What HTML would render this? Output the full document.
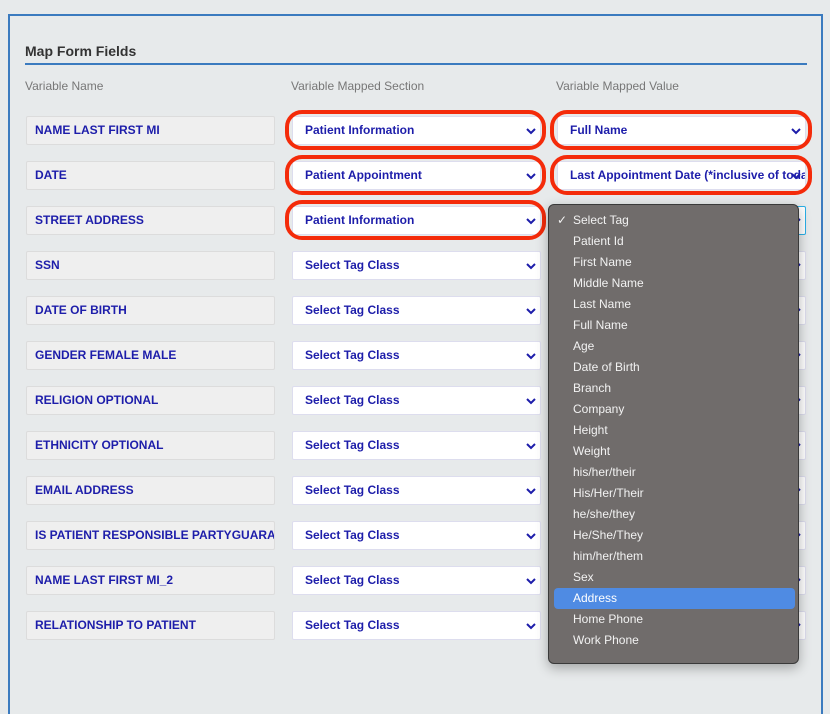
<!DOCTYPE html>
<html><head><meta charset="utf-8"><style>
*{box-sizing:border-box;margin:0;padding:0}
body{width:830px;height:652px;overflow:hidden;background:#e7eaeb;font-family:"Liberation Sans",sans-serif;position:relative}
.panel{position:absolute;left:8px;top:14px;width:815px;height:700px;border:2px solid #3b7bbf;border-bottom:none;background:#e7eaeb}
.title{position:absolute;left:25px;top:43px;font-size:14px;font-weight:bold;color:#333}
.ul{position:absolute;left:25px;top:63px;width:782px;height:2px;background:#3b7bbf}
.hd{position:absolute;top:79px;font-size:12px;color:#777}
.nm{position:absolute;left:26px;width:249px;height:29px;background:#efefef;border:1px solid #dcdcdc;border-radius:2px;font-size:12px;font-weight:bold;color:#1d1daa;padding-left:8px;line-height:27px;white-space:nowrap;overflow:hidden}
.sel{position:absolute;width:249px;height:29px;background:#fff;border:1px solid #dde;border-radius:2px;font-size:12px;font-weight:bold;color:#1d1daa;padding-left:12px;line-height:27px;white-space:nowrap;overflow:hidden}
.sel svg{position:absolute;right:4px;top:10px}
.ring{position:absolute;border:4px solid #f42b0a;border-radius:17px;width:261px;height:40px}
.dd{position:absolute;left:548px;top:204px;width:251px;height:460px;background:#706c6b;border:1px solid #3a3a3a;border-radius:6px;box-shadow:0 4px 12px rgba(0,0,0,.3)}
.it{position:absolute;left:24px;font-size:12px;color:#f2f2f2;line-height:21px}
.hl{position:absolute;left:5px;top:383px;width:241px;height:21px;background:#4f8be3;border-radius:4px}
</style></head><body>
<div class="panel"></div>
<div class="title">Map Form Fields</div>
<div class="ul"></div>
<div class="hd" style="left:25px">Variable Name</div>
<div class="hd" style="left:291px">Variable Mapped Section</div>
<div class="hd" style="left:556px">Variable Mapped Value</div>

<div class="nm" style="top:116px">NAME LAST FIRST MI</div>
<div class="nm" style="top:161px">DATE</div>
<div class="nm" style="top:206px">STREET ADDRESS</div>
<div class="nm" style="top:251px">SSN</div>
<div class="nm" style="top:296px">DATE OF BIRTH</div>
<div class="nm" style="top:341px">GENDER FEMALE MALE</div>
<div class="nm" style="top:386px">RELIGION OPTIONAL</div>
<div class="nm" style="top:431px">ETHNICITY OPTIONAL</div>
<div class="nm" style="top:476px">EMAIL ADDRESS</div>
<div class="nm" style="top:521px">IS PATIENT RESPONSIBLE PARTYGUARANTOR</div>
<div class="nm" style="top:566px">NAME LAST FIRST MI_2</div>
<div class="nm" style="top:611px">RELATIONSHIP TO PATIENT</div>

<div class="sel" style="left:292px;top:116px">Patient Information<svg width="10" height="8"><path d="M1 2l4 4 4-4" stroke="#1d1daa" stroke-width="2" fill="none"/></svg></div>
<div class="sel" style="left:292px;top:161px">Patient Appointment<svg width="10" height="8"><path d="M1 2l4 4 4-4" stroke="#1d1daa" stroke-width="2" fill="none"/></svg></div>
<div class="sel" style="left:292px;top:206px">Patient Information<svg width="10" height="8"><path d="M1 2l4 4 4-4" stroke="#1d1daa" stroke-width="2" fill="none"/></svg></div>
<div class="sel" style="left:292px;top:251px">Select Tag Class<svg width="10" height="8"><path d="M1 2l4 4 4-4" stroke="#1d1daa" stroke-width="2" fill="none"/></svg></div>
<div class="sel" style="left:292px;top:296px">Select Tag Class<svg width="10" height="8"><path d="M1 2l4 4 4-4" stroke="#1d1daa" stroke-width="2" fill="none"/></svg></div>
<div class="sel" style="left:292px;top:341px">Select Tag Class<svg width="10" height="8"><path d="M1 2l4 4 4-4" stroke="#1d1daa" stroke-width="2" fill="none"/></svg></div>
<div class="sel" style="left:292px;top:386px">Select Tag Class<svg width="10" height="8"><path d="M1 2l4 4 4-4" stroke="#1d1daa" stroke-width="2" fill="none"/></svg></div>
<div class="sel" style="left:292px;top:431px">Select Tag Class<svg width="10" height="8"><path d="M1 2l4 4 4-4" stroke="#1d1daa" stroke-width="2" fill="none"/></svg></div>
<div class="sel" style="left:292px;top:476px">Select Tag Class<svg width="10" height="8"><path d="M1 2l4 4 4-4" stroke="#1d1daa" stroke-width="2" fill="none"/></svg></div>
<div class="sel" style="left:292px;top:521px">Select Tag Class<svg width="10" height="8"><path d="M1 2l4 4 4-4" stroke="#1d1daa" stroke-width="2" fill="none"/></svg></div>
<div class="sel" style="left:292px;top:566px">Select Tag Class<svg width="10" height="8"><path d="M1 2l4 4 4-4" stroke="#1d1daa" stroke-width="2" fill="none"/></svg></div>
<div class="sel" style="left:292px;top:611px">Select Tag Class<svg width="10" height="8"><path d="M1 2l4 4 4-4" stroke="#1d1daa" stroke-width="2" fill="none"/></svg></div>

<div class="sel" style="left:557px;top:116px">Full Name<svg width="10" height="8"><path d="M1 2l4 4 4-4" stroke="#1d1daa" stroke-width="2" fill="none"/></svg></div>
<div class="sel" style="left:557px;top:161px;padding-right:24px">Last Appointment Date (*inclusive of today)<svg width="10" height="8"><path d="M1 2l4 4 4-4" stroke="#1d1daa" stroke-width="2" fill="none"/></svg></div>
<div class="sel" style="left:557px;top:206px;border-color:#2bb0e8"><svg width="10" height="8"><path d="M1 2l4 4 4-4" stroke="#1d1daa" stroke-width="2" fill="none"/></svg></div>
<div class="sel" style="left:557px;top:251px"><svg width="10" height="8"><path d="M1 2l4 4 4-4" stroke="#1d1daa" stroke-width="2" fill="none"/></svg></div>
<div class="sel" style="left:557px;top:296px"><svg width="10" height="8"><path d="M1 2l4 4 4-4" stroke="#1d1daa" stroke-width="2" fill="none"/></svg></div>
<div class="sel" style="left:557px;top:341px"><svg width="10" height="8"><path d="M1 2l4 4 4-4" stroke="#1d1daa" stroke-width="2" fill="none"/></svg></div>
<div class="sel" style="left:557px;top:386px"><svg width="10" height="8"><path d="M1 2l4 4 4-4" stroke="#1d1daa" stroke-width="2" fill="none"/></svg></div>
<div class="sel" style="left:557px;top:431px"><svg width="10" height="8"><path d="M1 2l4 4 4-4" stroke="#1d1daa" stroke-width="2" fill="none"/></svg></div>
<div class="sel" style="left:557px;top:476px"><svg width="10" height="8"><path d="M1 2l4 4 4-4" stroke="#1d1daa" stroke-width="2" fill="none"/></svg></div>
<div class="sel" style="left:557px;top:521px"><svg width="10" height="8"><path d="M1 2l4 4 4-4" stroke="#1d1daa" stroke-width="2" fill="none"/></svg></div>
<div class="sel" style="left:557px;top:566px"><svg width="10" height="8"><path d="M1 2l4 4 4-4" stroke="#1d1daa" stroke-width="2" fill="none"/></svg></div>
<div class="sel" style="left:557px;top:611px"><svg width="10" height="8"><path d="M1 2l4 4 4-4" stroke="#1d1daa" stroke-width="2" fill="none"/></svg></div>

<div class="ring" style="left:285px;top:110px"></div>
<div class="ring" style="left:285px;top:155px"></div>
<div class="ring" style="left:285px;top:200px"></div>
<div class="ring" style="left:550px;top:110px;width:262px"></div>
<div class="ring" style="left:550px;top:155px;width:262px"></div>

<div class="dd">
<div class="hl"></div>
<div class="it" style="left:8px;top:5px">✓</div>
<div class="it" style="top:5px">Select Tag</div>
<div class="it" style="top:26px">Patient Id</div>
<div class="it" style="top:47px">First Name</div>
<div class="it" style="top:68px">Middle Name</div>
<div class="it" style="top:89px">Last Name</div>
<div class="it" style="top:110px">Full Name</div>
<div class="it" style="top:131px">Age</div>
<div class="it" style="top:152px">Date of Birth</div>
<div class="it" style="top:173px">Branch</div>
<div class="it" style="top:194px">Company</div>
<div class="it" style="top:215px">Height</div>
<div class="it" style="top:236px">Weight</div>
<div class="it" style="top:257px">his/her/their</div>
<div class="it" style="top:278px">His/Her/Their</div>
<div class="it" style="top:299px">he/she/they</div>
<div class="it" style="top:320px">He/She/They</div>
<div class="it" style="top:341px">him/her/them</div>
<div class="it" style="top:362px">Sex</div>
<div class="it" style="top:383px;color:#fff">Address</div>
<div class="it" style="top:404px">Home Phone</div>
<div class="it" style="top:425px">Work Phone</div>
</div>
</body></html>
